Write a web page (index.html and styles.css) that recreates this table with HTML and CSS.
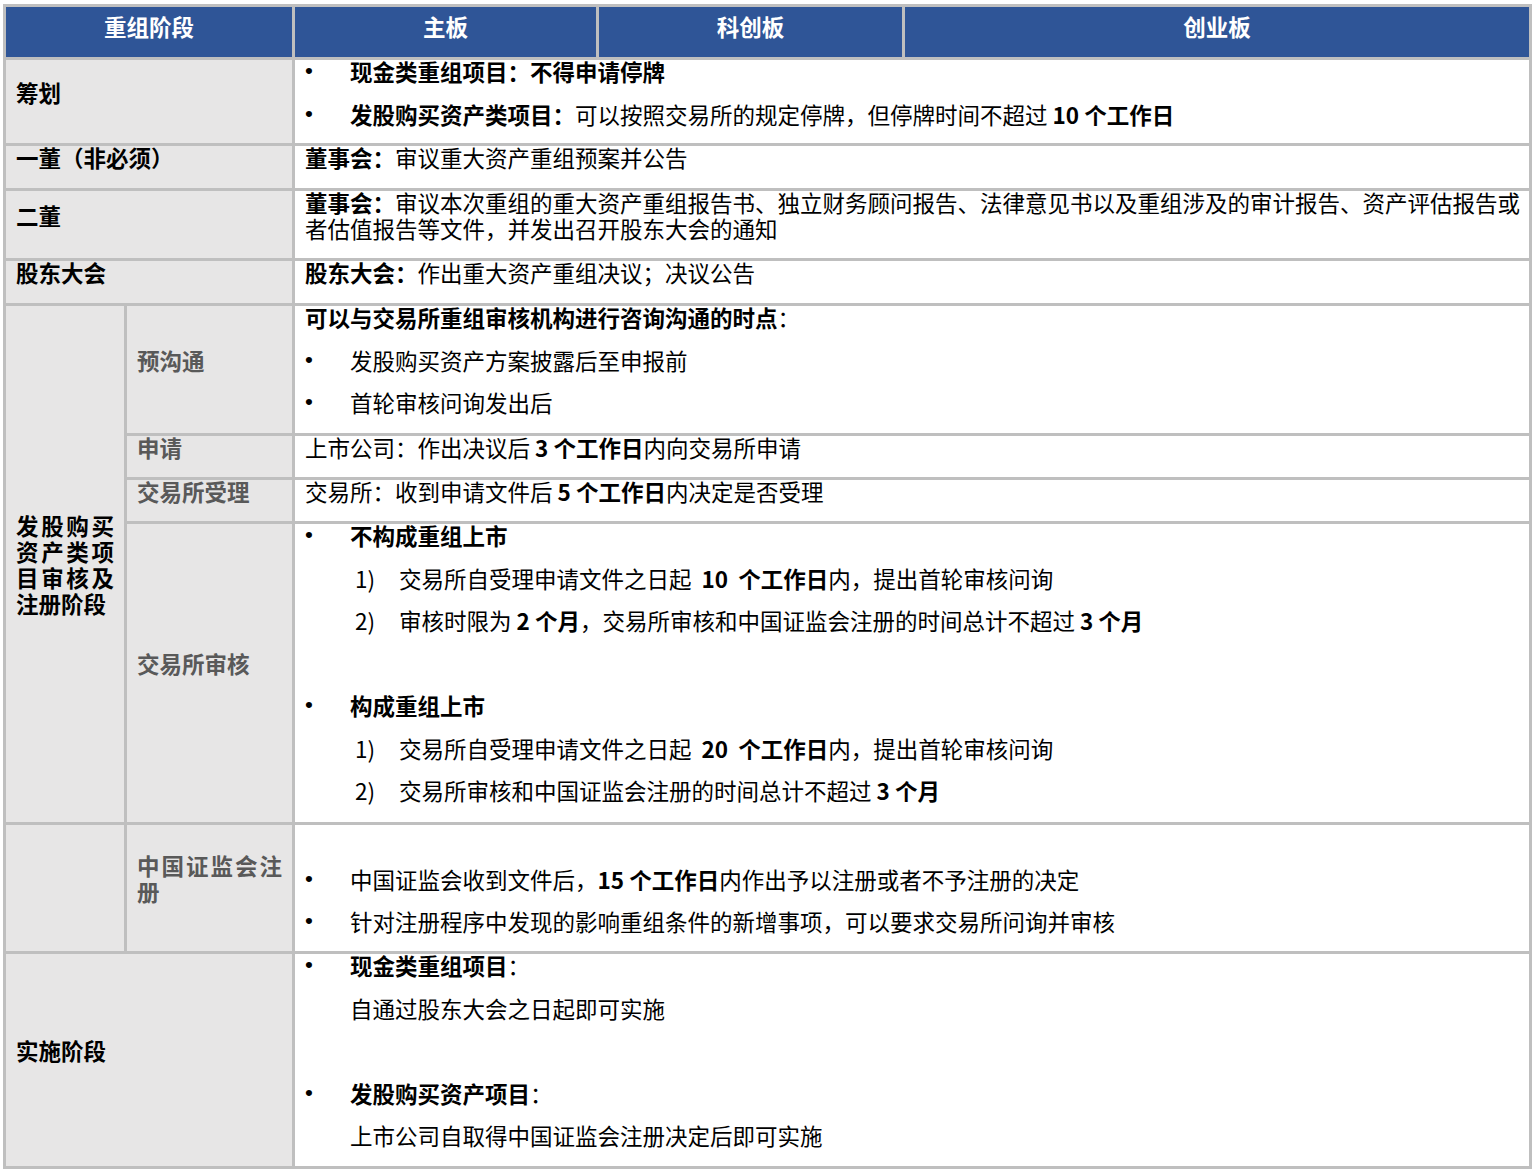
FILE: index.html
```html
<!DOCTYPE html>
<html lang="zh-CN">
<head>
<meta charset="utf-8">
<title>重组阶段</title>
<link rel="stylesheet" href="styles.css">
</head>
<body>
<div class="table">
  <div class="th th-stage">重组阶段</div>
  <div class="th">主板</div>
  <div class="th">科创板</div>
  <div class="th">创业板</div>

  <div class="label"><span class="txt">筹划</span></div>
  <div class="content">
    <div class="li"><span class="b">•</span><span><strong>现金类重组项目：不得申请停牌</strong></span></div>
    <div class="li"><span class="b">•</span><span><strong>发股购买资产类项目：</strong>可以按照交易所的规定停牌，但停牌时间不超过 <strong>10 个工作日</strong></span></div>
  </div>

  <div class="label"><span class="txt">一董（非必须）</span></div>
  <div class="content">
    <p class="p"><strong>董事会：</strong>审议重大资产重组预案并公告</p>
  </div>

  <div class="label"><span class="txt">二董</span></div>
  <div class="content">
    <p class="p"><strong>董事会：</strong>审议本次重组的重大资产重组报告书、独立财务顾问报告、法律意见书以及重组涉及的审计报告、资产评估报告或者估值报告等文件，并发出召开股东大会的通知</p>
  </div>

  <div class="label"><span class="txt">股东大会</span></div>
  <div class="content">
    <p class="p"><strong>股东大会：</strong>作出重大资产重组决议；决议公告</p>
  </div>

  <div class="label group"><span class="txt">发股购买资产类项目审核及注册阶段</span></div>
  <div class="label sub"><span class="txt">预沟通</span></div>
  <div class="content">
    <p class="p"><strong>可以与交易所重组审核机构进行咨询沟通的时点</strong>：</p>
    <div class="li"><span class="b">•</span><span>发股购买资产方案披露后至申报前</span></div>
    <div class="li"><span class="b">•</span><span>首轮审核问询发出后</span></div>
  </div>

  <div class="label sub"><span class="txt">申请</span></div>
  <div class="content">
    <p class="p">上市公司：作出决议后 <strong>3 个工作日</strong>内向交易所申请</p>
  </div>

  <div class="label sub"><span class="txt">交易所受理</span></div>
  <div class="content">
    <p class="p">交易所：收到申请文件后 <strong>5 个工作日</strong>内决定是否受理</p>
  </div>

  <div class="label sub"><span class="txt">交易所审核</span></div>
  <div class="content">
    <div class="li"><span class="b">•</span><span><strong>不构成重组上市</strong></span></div>
    <div class="li num"><span class="n">1)</span><span>交易所自受理申请文件之日起&nbsp;&nbsp;<strong>10&nbsp;&nbsp;个工作日</strong>内，提出首轮审核问询</span></div>
    <div class="li num"><span class="n">2)</span><span>审核时限为 <strong>2 个月</strong>，交易所审核和中国证监会注册的时间总计不超过 <strong>3 个月</strong></span></div>
    <p class="p empty">&nbsp;</p>
    <div class="li"><span class="b">•</span><span><strong>构成重组上市</strong></span></div>
    <div class="li num"><span class="n">1)</span><span>交易所自受理申请文件之日起&nbsp;&nbsp;<strong>20&nbsp;&nbsp;个工作日</strong>内，提出首轮审核问询</span></div>
    <div class="li num"><span class="n">2)</span><span>交易所审核和中国证监会注册的时间总计不超过 <strong>3 个月</strong></span></div>
  </div>

  <div class="label blank"></div>
  <div class="label sub"><span class="txt">中国证监会注册</span></div>
  <div class="content">
    <p class="p empty">&nbsp;</p>
    <div class="li"><span class="b">•</span><span>中国证监会收到文件后，<strong>15 个工作日</strong>内作出予以注册或者不予注册的决定</span></div>
    <div class="li"><span class="b">•</span><span>针对注册程序中发现的影响重组条件的新增事项，可以要求交易所问询并审核</span></div>
  </div>

  <div class="label"><span class="txt">实施阶段</span></div>
  <div class="content">
    <div class="li"><span class="b">•</span><span><strong>现金类重组项目</strong>：</span></div>
    <p class="p ind">自通过股东大会之日起即可实施</p>
    <p class="p empty">&nbsp;</p>
    <div class="li"><span class="b">•</span><span><strong>发股购买资产项目</strong>：</span></div>
    <p class="p ind">上市公司自取得中国证监会注册决定后即可实施</p>
  </div>
</div>
</body>
</html>
```

FILE: styles.css
```css
html, body {
  margin: 0;
  padding: 0;
  background: #ffffff;
}

body {
  font-family: "Noto Sans CJK SC", "Noto Sans", sans-serif;
  font-size: 22.5px;
  line-height: 26px;
  color: #000000;
}

strong {
  font-weight: 700;
}

.table {
  display: grid;
  grid-template-columns: 118px 165px 301px 303px 624px;
  grid-template-rows: 50px 83px 42px 67px 42px 127px 41px 41px 298px 126px 212px;
  gap: 3px;
  padding: 3px;
  margin: 4px 0 0 3px;
  width: max-content;
  background: #bfbfbf;
}

.th {
  background: #2f5597;
  color: #ffffff;
  font-weight: 700;
  text-align: center;
  padding-top: 6px;
  box-sizing: border-box;
}

.th-stage {
  grid-column: 1 / 3;
}

.label {
  grid-column: 1 / 3;
  background: #e7e6e6;
  display: flex;
  align-items: center;
  padding: 0 10px 20px 10px;
  font-weight: 700;
  text-align: justify;
  min-width: 0;
}

.label .txt {
  flex: 0 1 auto;
  min-width: 0;
}

.group {
  grid-column: 1;
  grid-row: span 4;
  padding-bottom: 0;
}

.sub {
  grid-column: 2;
  color: #595959;
}

.blank {
  grid-column: 1;
}

.content {
  grid-column: 3 / 6;
  background: #ffffff;
  padding: 0 5px 0 10px;
  min-width: 0;
}

.content > :first-child {
  margin-top: -2px;
}

.p {
  margin: 0 0 16.5px 0;
}

.li {
  display: flex;
  margin: 0 0 16.5px 0;
}

.li .b {
  flex: none;
  width: 45px;
  font-family: "Liberation Sans", sans-serif;
}

.num {
  padding-left: 50px;
}

.num .n {
  flex: none;
  width: 44px;
}

.ind {
  padding-left: 45px;
}
```
